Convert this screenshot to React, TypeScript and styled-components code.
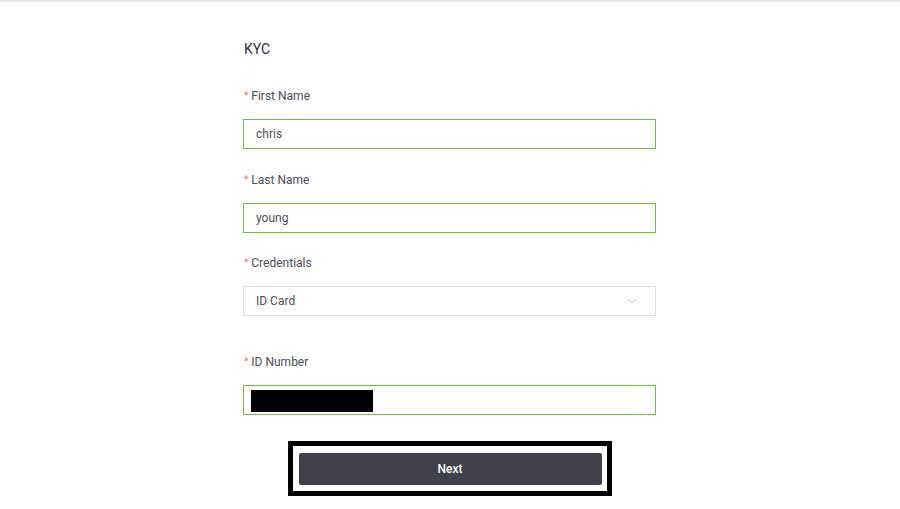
import React from "react";
import styled, { createGlobalStyle } from "styled-components";

const GlobalStyle = createGlobalStyle`
  html, body {
    margin: 0;
    padding: 0;
    background: #fff;
    font-family: Roboto, "Liberation Sans", Arial, sans-serif;
  }
`;

const TopBar = styled.div`
  height: 2px;
  background: #e4e7ed;
`;

const Page = styled.div`
  display: flex;
  justify-content: center;
  padding-right: 1px;
`;

const Form = styled.div`
  width: 413px;
  padding-top: 37px;
  display: flex;
  flex-direction: column;
`;

const Title = styled.h3`
  margin: 0 0 28px 1px;
  font-size: 14px;
  line-height: 20px;
  font-weight: 400;
  color: #303133;
`;

const Item = styled.div<{ $extra?: number }>`
  display: flex;
  flex-direction: column;
  margin-bottom: ${(p) => 22 + (p.$extra ?? 0)}px;
`;

const Label = styled.label`
  display: flex;
  align-items: center;
  font-size: 12px;
  line-height: 20px;
  color: #4a4d55;
  margin: -1px 0 13px 1px;

  &::before {
    content: "*";
    color: #f56c6c;
    font-size: 10px;
    margin-right: 3px;
  }
`;

const Field = styled.div<{ $ok?: boolean }>`
  box-sizing: border-box;
  height: 30px;
  display: flex;
  align-items: center;
  justify-content: space-between;
  padding: 0 12px;
  border: 1px solid ${(p) => (p.$ok ? "#67c23a" : "#dcdfe6")};
  font-size: 12px;
  color: #4d5058;
`;

const Redacted = styled.span`
  width: 122px;
  height: 22px;
  margin-left: -5px;
  margin-top: 2px;
  background: #000;
`;

const Chevron = styled.svg`
  width: 10px;
  height: 6px;
  margin-right: 6px;
`;

const Outline = styled.div`
  align-self: center;
  margin-top: 4px;
  border: 5px solid #000;
  padding: 7px 5px 6px 6px;
`;

const NextButton = styled.button`
  width: 303px;
  height: 32px;
  border: none;
  border-radius: 2px;
  background: #41414b;
  color: #fff;
  font-family: Roboto, "Liberation Sans", Arial, sans-serif;
  font-size: 12px;
  font-weight: 500;
  display: block;
`;

export default function App() {
  return (
    <>
      <GlobalStyle />
      <TopBar />
      <Page>
        <Form>
          <Title>KYC</Title>
          <Item>
            <Label>First Name</Label>
            <Field $ok>chris</Field>
          </Item>
          <Item $extra={-1}>
            <Label>Last Name</Label>
            <Field $ok>young</Field>
          </Item>
          <Item $extra={15}>
            <Label>Credentials</Label>
            <Field>
              ID Card
              <Chevron viewBox="0 0 10 6">
                <path d="M1 1 L5 5 L9 1" fill="none" stroke="#c0c4cc" strokeWidth="1" />
              </Chevron>
            </Field>
          </Item>
          <Item>
            <Label>ID Number</Label>
            <Field $ok>
              <Redacted />
            </Field>
          </Item>
          <Outline>
            <NextButton>Next</NextButton>
          </Outline>
        </Form>
      </Page>
    </>
  );
}
